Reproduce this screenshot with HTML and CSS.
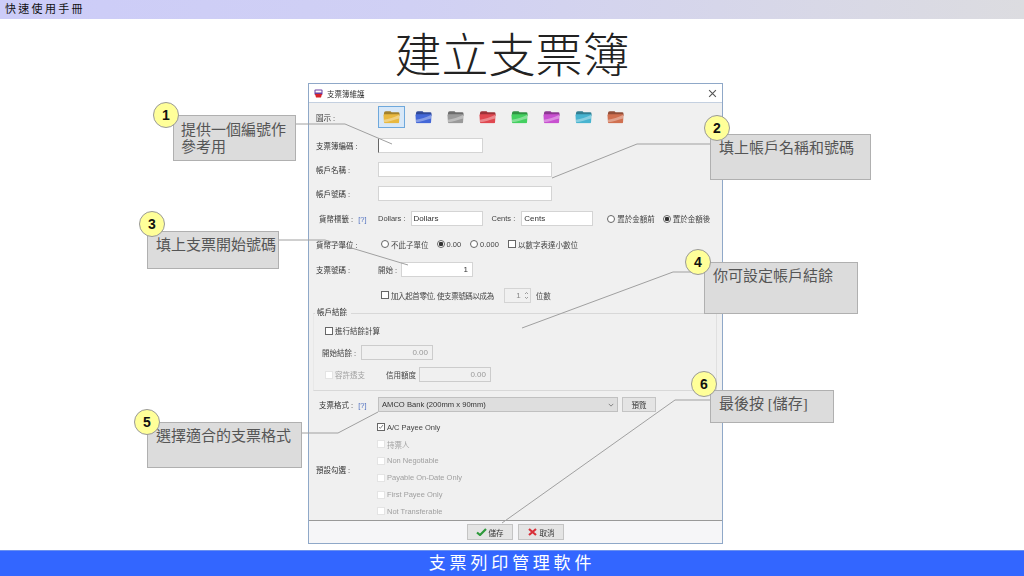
FILE: index.html
```html
<!DOCTYPE html>
<html lang="zh-Hant">
  <head>
    <meta charset="UTF-8" />
    <title>建立支票簿</title>
    <link rel="stylesheet" href="styles.css">
  </head>
  <body>
    <div class="slide">
      <div class="top-bar">快速使用手冊</div>
      <h1>建立支票簿</h1>

      <div class="dialog">
        <div class="dialog-title">
          <svg class="app-icon" viewBox="0 0 9 9">
            <rect x="0.5" y="0.5" width="8" height="5.500" rx="1" fill="#6a3fa0" />
            <rect x="1.5" y="1.5" width="6" height="2" fill="#fff" />
            <path d="M1 5h7l-1 3.500H2z" fill="#d8232a" />
          </svg>
          <span>支票簿維護</span>
          <svg class="close" viewBox="0 0 8 8"><path d="M1 1l6 6M7 1l-6 6" /></svg>
        </div>

        <div class="dialog-body">
          <div class="row row-icons">
            <label class="lbl">圖示 :</label>
            <div class="folders">
              <svg class="folder selected" style="--c:#e8b840" viewBox="0 0 18 14"><use href="#folder" /></svg>
              <svg class="folder" style="--c:#4468d8" viewBox="0 0 18 14"><use href="#folder" /></svg>
              <svg class="folder" style="--c:#9a9a9a" viewBox="0 0 18 14"><use href="#folder" /></svg>
              <svg class="folder" style="--c:#e04850" viewBox="0 0 18 14"><use href="#folder" /></svg>
              <svg class="folder" style="--c:#44d060" viewBox="0 0 18 14"><use href="#folder" /></svg>
              <svg class="folder" style="--c:#c850d0" viewBox="0 0 18 14"><use href="#folder" /></svg>
              <svg class="folder" style="--c:#48b4d0" viewBox="0 0 18 14"><use href="#folder" /></svg>
              <svg class="folder" style="--c:#d07050" viewBox="0 0 18 14"><use href="#folder" /></svg>
            </div>
          </div>

          <div class="row row-code">
            <label class="lbl">支票簿編碼 :</label>
            <input class="field w-code" type="text" />
          </div>
          <div class="row row-std">
            <label class="lbl">帳戶名稱 :</label>
            <input class="field w-long" type="text" />
          </div>
          <div class="row row-std">
            <label class="lbl">帳戶號碼 :</label>
            <input class="field w-long" type="text" />
          </div>

          <div class="row row-cur">
            <label class="lbl lbl-tag">貨幣標籤 : <a>[?]</a></label>
            <span class="txt">Dollars :</span>
            <input class="field w-72 dollars" type="text" value="Dollars" />
            <span class="txt cents-lbl">Cents :</span>
            <input class="field w-72" type="text" value="Cents" />
            <span class="radio pos-first"></span><span class="txt">置於金額前</span>
            <span class="radio on pos-second"></span><span class="txt">置於金額後</span>
          </div>

          <div class="row row-sub">
            <label class="lbl">貨幣子單位 :</label>
            <span class="radio sub-first"></span><span class="txt">不此子單位</span>
            <span class="radio on sub-second"></span><span class="txt">0.00</span>
            <span class="radio gap-9"></span><span class="txt">0.000</span>
            <span class="check gap-9"></span><span class="txt">以數字表達小數位</span>
          </div>

          <div class="row row-no">
            <label class="lbl">支票號碼 :</label>
            <span class="txt start-lbl">開始 :</span>
            <input class="field w-72 num" type="text" value="1" />
          </div>

          <div class="row row-pad">
            <span class="check"></span><span class="txt tight">加入起首零位, 使支票號碼以成為</span>
            <span class="spin">1<svg viewBox="0 0 5 9"><path d="M1 3l1.500-1.500L4 3M1 6l1.500 1.500L4 6" /></svg></span>
            <span class="txt">位數</span>
          </div>

          <fieldset class="group">
            <legend>帳戶結餘</legend>
            <div class="group-row row-balance">
              <span class="check"></span><span class="txt">進行結餘計算</span>
            </div>
            <div class="group-row row-open">
              <span class="txt">開始結餘 :</span>
              <input class="field w-72 num off" type="text" value="0.00" disabled />
            </div>
            <div class="group-row row-credit">
              <span class="check off"></span><span class="txt dim">容許透支</span>
              <span class="txt credit-lbl">信用額度</span>
              <input class="field w-72 num off" type="text" value="0.00" disabled />
            </div>
          </fieldset>

          <div class="row row-format">
            <label class="lbl lbl-tag">支票格式 : <a>[?]</a></label>
            <div class="select">AMCO Bank (200mm x 90mm)<svg viewBox="0 0 8 5"><path d="M1 1l3 3 3-3" /></svg></div>
            <span class="btn preview">預覽</span>
          </div>

          <div class="row row-defaults">
            <label class="lbl">預設勾選 :</label>
            <ul class="checks">
              <li><span class="check ticked"><svg viewBox="0 0 9 9"><path d="M1.500 4.500l2 2 4-5" /></svg></span><span class="txt">A/C Payee Only</span></li>
              <li><span class="check off"></span><span class="txt dim">持票人</span></li>
              <li><span class="check off"></span><span class="txt dim">Non Negotiable</span></li>
              <li><span class="check off"></span><span class="txt dim">Payable On-Date Only</span></li>
              <li><span class="check off"></span><span class="txt dim">First Payee Only</span></li>
              <li><span class="check off"></span><span class="txt dim">Not Transferable</span></li>
            </ul>
          </div>
        </div>

        <div class="dialog-foot">
          <span class="btn">
            <svg viewBox="0 0 11 8"><path class="ok" d="M1 4.500l3 2.500 6-6" /></svg>儲存
          </span>
          <span class="btn">
            <svg viewBox="0 0 11 8"><path class="no" d="M2 1l7 6M9 1l-7 6" /></svg>取消
          </span>
        </div>
      </div>

      <div class="bottom-bar">支票列印管理軟件</div>

      <svg class="leaders" viewBox="0 0 1024 576">
        <polyline points="295,124 345,124 392,144" />
        <polyline points="710,144 637,144 552,178" />
        <polyline points="279,240 325,240 408,265" />
        <polyline points="704,272 673,272 522,328" />
        <polyline points="301,433 338,433 378,412" />
        <polyline points="710,400 675,400 502,523" />
      </svg>

      <div class="note n1"><b>1</b>提供一個編號作<br>參考用</div>
      <div class="note n2"><b>2</b>填上帳戶名稱和號碼</div>
      <div class="note n3"><b>3</b>填上支票開始號碼</div>
      <div class="note n4"><b>4</b>你可設定帳戶結餘</div>
      <div class="note n5"><b>5</b>選擇適合的支票格式</div>
      <div class="note n6"><b>6</b>最後按 [儲存]</div>

      <svg class="defs" width="0" height="0">
        <symbol id="folder" viewBox="0 0 18 14">
          <path d="M1 3q0-2 2-2h5l1 1h7q1.500 0 1.500 1.500V6H1z" fill="var(--c)" style="filter:brightness(.7)" />
          <path d="M.5 5q0-1 1-1h15q1 0 1 1l-.5 7.500q0 1-1 1H2q-1 0-1-1z" fill="var(--c)" />
          <path d="M1 10C6 9 12 7 17.500 4.500l-.3 4C12 10 6 12 1.200 12.500z" fill="#fff" opacity=".35" />
        </symbol>
      </svg>
    </div>
  </body>
</html>
```

FILE: styles.css
```css
:root {
  --cjk: "Liberation Sans", "Noto Sans CJK TC", sans-serif;
  --serif: "Liberation Serif", "Noto Sans CJK TC", serif;
  --dlg-bg: #f0f0f0;
  --label: #333;
}

* {
  box-sizing: border-box;
}

body {
  margin: 0;
  background: #fff;
  font-family: var(--cjk);
}

.slide {
  position: relative;
  width: 1024px;
  height: 576px;
  overflow: hidden;
  display: flex;
  flex-direction: column;
  align-items: center;
}

.top-bar {
  align-self: stretch;
  height: 19px;
  padding-left: 5px;
  background: linear-gradient(90deg, #ccccf8 0%, #d0d0f4 40%, #dcdce0 100%);
  color: #111;
  font-size: 11px;
  line-height: 19px;
  letter-spacing: 2.3px;
}

h1 {
  margin: 11px 0 0;
  height: 53px;
  font-family: var(--serif);
  font-weight: 300;
  font-size: 47px;
  line-height: 53px;
  color: #222;
}

/* dialog */
.dialog {
  width: 415px;
  height: 461px;
  margin-left: 7px;
  border: 1px solid #8fa8c8;
  background: var(--dlg-bg);
  display: flex;
  flex-direction: column;
  font-size: 7.5px;
  color: var(--label);
  filter: blur(0.35px);
}

.dialog-title {
  height: 19px;
  padding: 0 5px 0 5px;
  background: #fff;
  border-bottom: 1px solid #c4d0e0;
  display: flex;
  align-items: center;
  gap: 4px;
}

.app-icon {
  width: 9px;
  height: 9px;
}

.close {
  width: 9px;
  height: 9px;
  margin-left: auto;
}
.close path {
  stroke: #555;
  fill: none;
}

.dialog-body {
  flex: 1;
  padding: 3px 6px 0;
}

.dialog-foot {
  height: 23px;
  background: #f6f6f8;
  border-top: 1px solid #999;
  display: flex;
  justify-content: center;
  align-items: center;
  gap: 5px;
  padding-right: 1px;
}

.row {
  display: flex;
  align-items: center;
}

.lbl {
  width: 63px;
  padding-left: 1px;
  flex: none;
}

.txt {
  flex: none;
  white-space: nowrap;
  font-size: 7.5px;
  color: #444;
}

.tight {
  letter-spacing: -0.4px;
}

.dim {
  color: #a0a0a0;
}

.field {
  height: 15px;
  padding: 0 2px;
  border: 1px solid #d4d4d4;
  background: #fff;
  font: 8px var(--cjk);
  color: #333;
  outline: none;
}

.num {
  text-align: right;
  padding-right: 4px;
}

.off {
  background: #f0f0f0;
  border-color: #ccc;
  color: #999;
}

.w-code { width: 105px; border-left: 1px solid #666; }
.w-long { width: 174px; }
.w-72 { width: 72px; }

.row-icons { height: 22px; }
.row-code { height: 15px; margin-top: 10px; }
.row-std { height: 15px; margin-top: 9px; }
.row-cur { height: 15px; margin-top: 10px; }
.row-sub { height: 14px; margin-top: 11px; }
.row-no { height: 15px; margin-top: 11px; }
.row-pad { height: 14px; margin-top: 11px; padding-left: 66px; }
.row-format { height: 15px; margin-top: 6px; }
.row-defaults { margin-top: 7px; }

.folders {
  display: flex;
  gap: 5px;
}

.folder {
  width: 27px;
  height: 22px;
  padding: 3px 4px;
  border: 1px solid transparent;
}
.folder.selected {
  border-color: #6ea8dc;
  background: #d8e8f8;
}

.lbl-tag {
  padding-left: 4px;
}
.lbl-tag a {
  color: #5070c0;
  margin-left: 3px;
}

.dollars { margin: 0 9px 0 5px; }
.cents-lbl { margin-right: 6px; }

.radio,
.check {
  flex: none;
  display: inline-block;
  width: 8px;
  height: 8px;
  background: #fff;
  margin-right: 2px;
}
.radio {
  border: 1px solid #666;
  border-radius: 50%;
}
.radio.on {
  background: radial-gradient(circle, #333 0 2px, #fff 2.5px);
}
.check {
  border: 1px solid #666;
}
.check.off {
  border-color: #e4e4e4;
}
.check.ticked svg {
  display: block;
  width: 100%;
  height: 100%;
}
.check.ticked path {
  fill: none;
  stroke: #444;
}

.pos-first { margin-left: 14px; }
.pos-second { margin-left: 8px; }
.sub-first { margin-left: 3px; }
.sub-second { margin-left: 8px; }
.gap-9 { margin-left: 9px; }

.start-lbl { width: 23px; }

.spin {
  position: relative;
  width: 27px;
  height: 15px;
  margin: 0 5px 0 10px;
  padding-right: 9px;
  border: 1px solid #d4d4d4;
  background: #f0f0f0;
  text-align: right;
  line-height: 13px;
  font-size: 8px;
  color: #888;
}
.spin svg {
  position: absolute;
  right: 1px;
  top: 2px;
  width: 5px;
  height: 9px;
}
.spin path {
  fill: none;
  stroke: #777;
  stroke-width: 0.7;
}

.group {
  margin: 7px 0 0 -2px;
  width: 404px;
  height: 82px;
  padding: 0 0 0 8px;
  border: 0;
  border-top: 1px solid #d8d8d8;
  border-bottom: 1px solid #d8d8d8;
  border-left: 1px solid #e8e8e8;
  border-right: 1px solid #e0e0e0;
  min-width: 0;
}
.group legend {
  padding: 0 4px 0 2px;
  margin-left: -7px;
  font-size: 7.5px;
  line-height: 8px;
}

.group-row {
  display: flex;
  align-items: center;
  height: 15px;
}
.row-balance { margin-top: 6px; padding-left: 3px; }
.row-open { margin-top: 7px; }
.row-open .txt { width: 39px; }
.row-credit { margin-top: 7px; padding-left: 3px; }
.credit-lbl { margin: 0 3px 0 21px; }

.select {
  width: 240px;
  height: 15px;
  padding: 0 3px;
  border: 1px solid #c0c0c0;
  background: #dedede;
  font-size: 7.6px;
  line-height: 13px;
  display: flex;
  justify-content: space-between;
  align-items: center;
}
.select svg {
  width: 6px;
  height: 4px;
}
.select path {
  fill: none;
  stroke: #666;
}

.btn {
  display: flex;
  align-items: center;
  justify-content: center;
  gap: 2px;
  width: 46px;
  height: 16px;
  border: 1px solid #c4c4c4;
  background: #e4e4e4;
  color: #333;
}
.btn svg {
  width: 11px;
  height: 8px;
}
.btn path {
  fill: none;
  stroke-width: 2.2;
}
.btn .ok { stroke: #2e9a3c; }
.btn .no { stroke: #d8303a; }

.preview {
  width: 34px;
  height: 15px;
  margin-left: 4px;
}

.checks {
  list-style: none;
  margin: 0 0 0 -1px;
  padding: 0;
}
.checks li {
  height: 16.8px;
  display: flex;
  align-items: center;
}

.bottom-bar {
  position: absolute;
  left: 0;
  right: 0;
  bottom: 0;
  height: 26px;
  background: #3366ff;
  border-top: 1px solid #6a90f0;
  color: #fff;
  font-size: 17px;
  line-height: 25px;
  letter-spacing: 3.8px;
  text-align: center;
}

/* callouts sit over the dialog */
.leaders {
  position: absolute;
  left: 0;
  top: 0;
  width: 1024px;
  height: 576px;
  pointer-events: none;
}
.leaders polyline {
  fill: none;
  stroke: #a0a0a0;
  stroke-width: 1;
}

.defs {
  position: absolute;
}

.note {
  position: absolute;
  padding: 5px 0 0 8px;
  background: #dcdcdc;
  border: 1px solid #b0b0b0;
  font-family: var(--serif);
  font-size: 15px;
  line-height: 17px;
  color: #555;
}
.note b {
  position: absolute;
  width: 26px;
  height: 26px;
  border: 1px solid #999;
  border-radius: 50%;
  background: #ffff99;
  font: 700 14px/24px "Liberation Sans", sans-serif;
  text-align: center;
  color: #111;
}

.n1 { left: 173px; top: 115px; width: 123px; height: 46px; padding: 6px 0 0 7px; }
.n1 b { left: -21px; top: -14px; }
.n2 { left: 710px; top: 134px; width: 161px; height: 46px; }
.n2 b { left: -7px; top: -20px; }
.n3 { left: 147px; top: 231px; width: 132px; height: 38px; }
.n3 b { left: -9px; top: -21px; }
.n4 { left: 704px; top: 262px; width: 154px; height: 52px; }
.n4 b { left: -20px; top: -14px; }
.n5 { left: 147px; top: 422px; width: 155px; height: 46px; }
.n5 b { left: -14px; top: -14px; }
.n6 { left: 710px; top: 390px; width: 124px; height: 33px; }
.n6 b { left: -20px; top: -20px; }
```
